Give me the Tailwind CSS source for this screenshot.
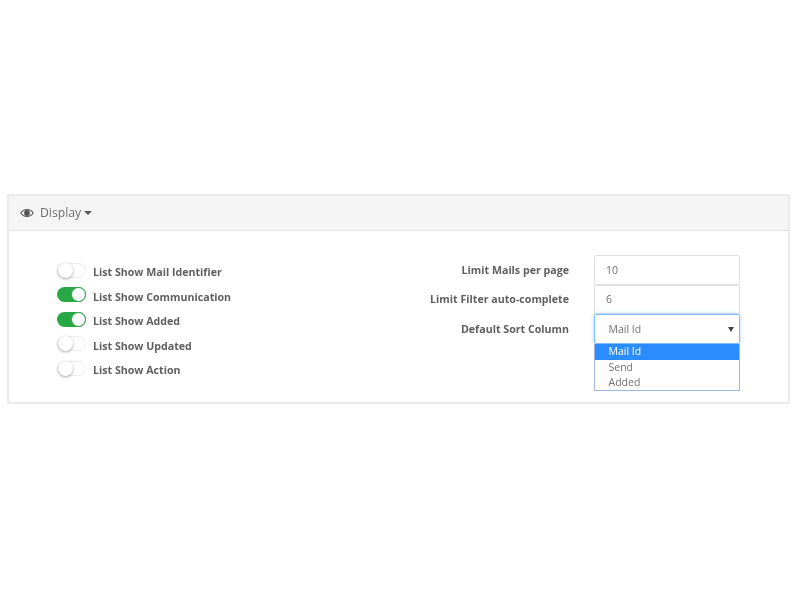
<!DOCTYPE html>
<html>
<head>
<meta charset="utf-8">
<script src="https://cdn.jsdelivr.net/npm/@tailwindcss/browser@4"></script>
</head>
<body class="bg-white font-['Open_Sans',sans-serif] text-[#5f5f5f]">
<div class="w-[800px] h-[600px] pt-[194px] pl-[7px] pr-[10px] blur-[0.35px]">
  <div class="border-2 border-[#ececec] h-[210px] bg-white">
    <div class="h-[35px] bg-[#f5f5f5] border-b border-[#e4e4e4] flex items-center pl-[11px] text-[12.2px] text-[#6e6e6e]">
      <svg class="w-[14px] h-[14px] mr-[6px]" viewBox="0 0 24 24"><path d="M1.500 12C4 8 7.500 6 12 6s8 2 10.500 6C20 16 16.500 18 12 18S4 16 1.500 12z" fill="none" stroke="#555" stroke-width="2"/><circle cx="12" cy="12" r="5" fill="#555"/></svg>
      <span>Display</span>
      <span class="ml-[3px] w-0 h-0 border-x-[4px] border-x-transparent border-t-[4px] border-t-[#555]"></span>
    </div>
    <div class="flex pt-[25.5px]">
      <div class="w-[400px] pl-[48px] pt-[6px] flex flex-col gap-[9.5px]">
        <div class="flex items-center gap-[7px] h-[15px]">
          <span class="w-[29px] h-[15px] rounded-full border border-[#ececec] bg-white relative"><span class="absolute left-0 -top-[1px] w-[15px] h-[15px] rounded-full bg-white shadow-[0_1px_3px_rgba(0,0,0,0.35)]"></span></span>
          <span class="text-[10.65px] font-bold leading-none pt-[5px]">List Show Mail Identifier</span>
        </div>
        <div class="flex items-center gap-[7px] h-[15px]">
          <span class="w-[29px] h-[15px] rounded-full bg-[#28a745] relative"><span class="absolute right-0 top-0 w-[15px] h-[15px] rounded-full bg-white border border-[#28a745]"></span></span>
          <span class="text-[10.65px] font-bold leading-none pt-[5px]">List Show Communication</span>
        </div>
        <div class="flex items-center gap-[7px] h-[15px]">
          <span class="w-[29px] h-[15px] rounded-full bg-[#28a745] relative"><span class="absolute right-0 top-0 w-[15px] h-[15px] rounded-full bg-white border border-[#28a745]"></span></span>
          <span class="text-[10.65px] font-bold leading-none pt-[5px]">List Show Added</span>
        </div>
        <div class="flex items-center gap-[7px] h-[15px]">
          <span class="w-[29px] h-[15px] rounded-full border border-[#ececec] bg-white relative"><span class="absolute left-0 -top-[1px] w-[15px] h-[15px] rounded-full bg-white shadow-[0_1px_3px_rgba(0,0,0,0.35)]"></span></span>
          <span class="text-[10.65px] font-bold leading-none pt-[5px]">List Show Updated</span>
        </div>
        <div class="flex items-center gap-[7px] h-[15px]">
          <span class="w-[29px] h-[15px] rounded-full border border-[#ececec] bg-white relative"><span class="absolute left-0 -top-[1px] w-[15px] h-[15px] rounded-full bg-white shadow-[0_1px_3px_rgba(0,0,0,0.35)]"></span></span>
          <span class="text-[10.65px] font-bold leading-none pt-[5px]">List Show Action</span>
        </div>
      </div>
      <div class="w-[160px] flex flex-col items-end text-[10.65px] font-bold -mt-[0.5px]">
        <div class="h-[29.5px] flex items-center">Limit Mails per page</div>
        <div class="h-[29.5px] flex items-center">Limit Filter auto-complete</div>
        <div class="h-[29.5px] flex items-center">Default Sort Column</div>
      </div>
      <div class="ml-[25px] w-[146px] relative text-[10.5px] text-[#707070] -mt-[1.5px]">
        <div class="h-[29.5px] border border-[#e0e0e0] rounded-[2px] flex items-center pl-[11px] pt-[2px]">10</div>
        <div class="h-[29.5px] border border-[#e0e0e0] rounded-[2px] flex items-center pl-[11px] pt-[1px]">6</div>
        <div class="h-[30px] border border-[#80bdff] rounded-[2px] shadow-[0_0_4px_rgba(128,189,255,0.6)] flex items-center justify-between pl-[13.5px] pr-[5px]"><span class="pt-[2px]">Mail Id</span><span class="w-0 h-0 border-x-[3px] border-x-transparent border-t-[5px] border-t-[#444]"></span></div>
        <div class="border border-[#9db8dc] border-t-0 h-[47px] leading-[15.5px] relative">
          <div class="bg-[#2a8cff] text-white pl-[13.5px] h-[15.5px]">Mail Id</div>
          <div class="pl-[13.5px] h-[15.5px]">Send</div>
          <div class="pl-[13.5px] h-[15.5px]">Added</div>
        </div>
      </div>
    </div>
  </div>
</div>
</body>
</html>
